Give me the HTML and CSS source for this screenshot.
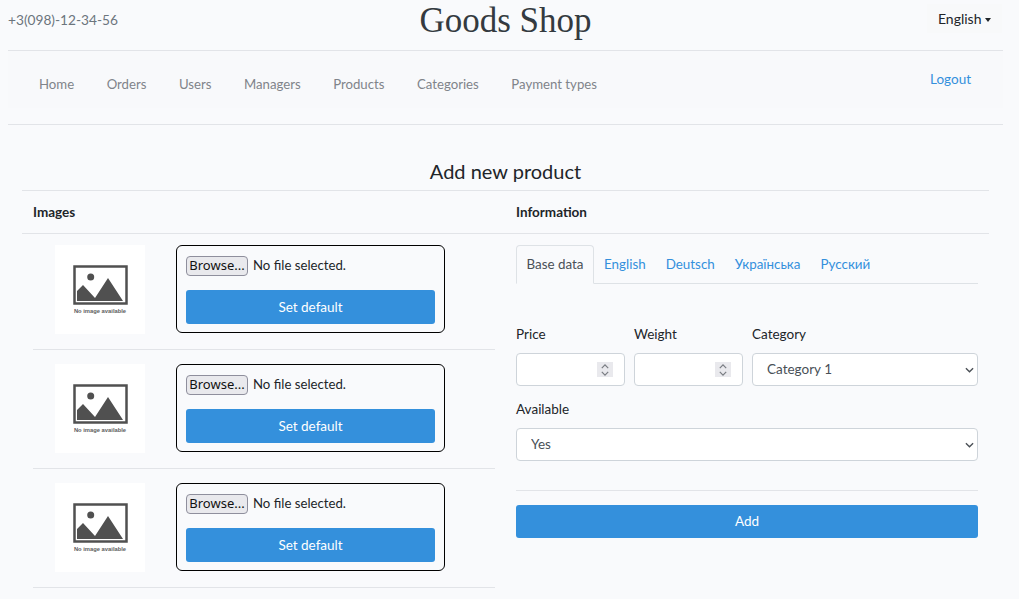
FILE: index.html
```html
<!DOCTYPE html>
<html>
<head>
    <title>Goods Shop</title>
    <link rel="stylesheet" href="styles.css">
</head>
<body>
    <svg class="defs">
        <symbol id="no-image" viewBox="0 0 90 89">
            <rect width="90" height="89" fill="#fff"/>
            <rect x="19.5" y="21.5" width="52" height="37" fill="none" stroke="#505050" stroke-width="2.5"/>
            <circle cx="35.7" cy="32" r="3.5" fill="#505050"/>
            <path d="M22 56 V46 L28 40 L40 53 L53 33 L68 56 Z" fill="#505050"/>
            <text class="thumb-text" x="45" y="68" text-anchor="middle">No image available</text>
        </symbol>
        <symbol id="chevron" viewBox="0 0 10 6">
            <path d="M1 1 L5 5 L9 1" fill="none" stroke="#4a4f55" stroke-width="1.5"/>
        </symbol>
    </svg>

    <header class="top-bar">
        <span class="phone">+3(098)-12-34-56</span>
        <h1 class="shop-name">Goods Shop</h1>
        <button class="lang-btn" type="button">English <i class="caret"></i></button>
    </header>

    <div class="nav-wrap">
        <nav class="main-nav">
            <ul class="nav-links">
                <li><a href="#">Home</a></li>
                <li><a href="#">Orders</a></li>
                <li><a href="#">Users</a></li>
                <li><a href="#">Managers</a></li>
                <li><a href="#">Products</a></li>
                <li><a href="#">Categories</a></li>
                <li><a href="#">Payment types</a></li>
            </ul>
            <a class="logout" href="#">Logout</a>
        </nav>
    </div>

    <main class="content">
        <h2 class="page-title">Add new product</h2>
        <div class="col-heads">
            <div class="col-head col-head-left">Images</div>
            <div class="col-head">Information</div>
        </div>

        <div class="columns">
            <section class="images">
                <div class="image-row">
                    <svg class="thumb"><use href="#no-image"/></svg>
                    <div class="file-box">
                        <div class="file-line"><button class="browse" type="button">Browse...</button><span>No file selected.</span></div>
                        <button class="btn-primary" type="button">Set default</button>
                    </div>
                </div>
                <div class="image-row">
                    <svg class="thumb"><use href="#no-image"/></svg>
                    <div class="file-box">
                        <div class="file-line"><button class="browse" type="button">Browse...</button><span>No file selected.</span></div>
                        <button class="btn-primary" type="button">Set default</button>
                    </div>
                </div>
                <div class="image-row">
                    <svg class="thumb"><use href="#no-image"/></svg>
                    <div class="file-box">
                        <div class="file-line"><button class="browse" type="button">Browse...</button><span>No file selected.</span></div>
                        <button class="btn-primary" type="button">Set default</button>
                    </div>
                </div>
            </section>

            <section class="info">
                <ul class="tabs">
                    <li class="tab active">Base data</li>
                    <li class="tab">English</li>
                    <li class="tab">Deutsch</li>
                    <li class="tab">Українська</li>
                    <li class="tab">Русский</li>
                </ul>

                <form class="product-form">
                    <div class="field-row">
                        <div class="field field-small">
                            <label for="price">Price</label>
                            <div class="control">
                                <input id="price" class="input" type="text">
                                <span class="spinner"><svg><use href="#chevron"/></svg><svg><use href="#chevron"/></svg></span>
                            </div>
                        </div>
                        <div class="field field-small">
                            <label for="weight">Weight</label>
                            <div class="control">
                                <input id="weight" class="input" type="text">
                                <span class="spinner"><svg><use href="#chevron"/></svg><svg><use href="#chevron"/></svg></span>
                            </div>
                        </div>
                        <div class="field field-wide">
                            <label for="category">Category</label>
                            <div class="control">
                                <select id="category" class="input"><option>Category 1</option></select>
                                <svg class="arrow"><use href="#chevron"/></svg>
                            </div>
                        </div>
                    </div>
                    <div class="field">
                        <label for="available">Available</label>
                        <div class="control">
                            <select id="available" class="input"><option>Yes</option></select>
                            <svg class="arrow"><use href="#chevron"/></svg>
                        </div>
                    </div>
                    <hr class="form-rule">
                    <button class="btn-primary btn-add" type="button">Add</button>
                </form>
            </section>
        </div>
    </main>
</body>
</html>
```

FILE: styles.css
```css
body {
    font-family: Lato, "Noto Sans", sans-serif;
    font-size: 13.5px;
    line-height: 1.5;
    color: #212529;
    background-color: #f9fafc;
    margin: 0;
    padding: 0 16px 0 8px;
}

.defs {
    display: none;
}

.top-bar {
    display: grid;
    grid-template-columns: 1fr auto 1fr;
    height: 50px;
    border-bottom: 1px solid #e2e4e8;
}

.phone {
    color: #6c757d;
    font-size: 13.7px;
    margin-top: 10px;
}

.shop-name {
    font-family: "Liberation Serif", serif;
    font-size: 35px;
    font-weight: 400;
    line-height: 40px;
    margin: 1px 0 0;
    color: #343a40;
}

.lang-btn {
    font: inherit;
    font-size: 14px;
    color: #212529;
    background-color: #f8f9fa;
    border: none;
    justify-self: end;
    height: 29px;
    width: 75px;
    margin: 4px 1px 0 0;
    padding: 0;
}

.caret {
    display: inline-block;
    vertical-align: 2px;
    border-top: 4px solid #212529;
    border-left: 3px solid transparent;
    border-right: 3px solid transparent;
}

.nav-wrap {
    padding-bottom: 16px;
    border-bottom: 1px solid #e2e4e8;
}

.main-nav {
    display: flex;
    justify-content: space-between;
    height: 57px;
    background-color: #f8f9fb;
    padding: 0 32px 0 31px;
}

.nav-links {
    display: flex;
    gap: 32.5px;
    list-style: none;
    font-size: 13.2px;
    margin: 0;
    padding: 24px 0 0;
}

.nav-links a {
    color: #80848a;
    text-decoration: none;
}

.logout {
    color: #3490dc;
    text-decoration: none;
    margin-top: 18px;
}

.content {
    padding: 0 14px;
}

.page-title {
    font-size: 20px;
    font-weight: 400;
    line-height: 30px;
    text-align: center;
    margin: 0;
    padding: 31px 0 4px;
}

.col-heads {
    display: flex;
    border-top: 1px solid #e2e4e8;
    border-bottom: 1px solid #e2e4e8;
    height: 42px;
    align-items: center;
    font-weight: 700;
}

.col-head-left {
    width: 494px;
    padding-left: 11px;
    box-sizing: border-box;
}

.columns {
    display: flex;
}

.images {
    width: 462px;
    margin-left: 11px;
    margin-right: 21px;
}

.image-row {
    display: flex;
    align-items: flex-start;
    height: 104px;
    padding-top: 11px;
    padding-left: 22px;
    margin-bottom: 3px;
    border-bottom: 1px solid #e2e4e8;
}

.thumb {
    width: 90px;
    height: 89px;
    margin-right: 31px;
}

.thumb-text {
    font-family: "Liberation Sans", sans-serif;
    font-size: 5.8px;
    font-weight: 700;
    fill: #606060;
}

.file-box {
    width: 269px;
    height: 88px;
    box-sizing: border-box;
    border: 1px solid #000;
    border-radius: 6px;
    padding: 9px;
}

.file-line {
    display: flex;
    align-items: center;
    gap: 5px;
    height: 21px;
    margin-bottom: 14px;
    font-size: 13.2px;
}

.browse {
    font-family: "Noto Sans", sans-serif;
    font-size: 13px;
    line-height: 16px;
    width: 62px;
    height: 20px;
    padding: 0 0 2px;
    color: #111;
    background-color: #e9e9ed;
    border: 1px solid #8f8f9d;
    border-radius: 4px;
}

.btn-primary {
    display: block;
    width: 100%;
    height: 34px;
    font: inherit;
    color: #fff;
    background-color: #3490dc;
    border: none;
    border-radius: 3px;
}

.info {
    width: 462px;
    padding-top: 11px;
}

.tabs {
    display: flex;
    list-style: none;
    margin: 0;
    padding: 0;
    height: 38px;
    border-bottom: 1px solid #dee2e6;
    font-size: 13.4px;
}

.tab {
    color: #3490dc;
    height: 38px;
    line-height: 38px;
    padding: 0 10px;
}

.tab.active {
    color: #495057;
    background-color: #f9fafc;
    border: 1px solid #dee2e6;
    border-bottom-color: #f9fafc;
    border-radius: 4px 4px 0 0;
    line-height: 37px;
    box-sizing: border-box;
    height: 39px;
    padding: 0 9.5px;
}

.product-form {
    padding-top: 39px;
}

.field-row {
    display: flex;
    gap: 9px;
}

.field-small {
    width: 109px;
}

.field-wide {
    flex: 1;
}

.field label {
    display: block;
    height: 22px;
    line-height: 22px;
    margin-bottom: 8px;
}

.field {
    margin-bottom: 12px;
}

.control {
    position: relative;
}

.input {
    display: block;
    appearance: none;
    width: 100%;
    height: 33px;
    box-sizing: border-box;
    font: inherit;
    color: #495057;
    background-color: #fff;
    border: 1px solid #ced4da;
    border-radius: 4px;
    padding: 0 14px;
}

.spinner {
    position: absolute;
    right: 12px;
    top: 9px;
    width: 16px;
    height: 15px;
    background-color: #e9e9ed;
    display: flex;
    flex-direction: column;
    align-items: center;
    justify-content: center;
    gap: 2px;
}

.spinner svg {
    width: 8px;
    height: 5px;
    opacity: 0.7;
}

.spinner svg:first-child {
    transform: rotate(180deg);
}

.arrow {
    position: absolute;
    right: 4px;
    top: 14px;
    width: 9px;
    height: 6px;
}

.form-rule {
    border: none;
    border-top: 1px solid #e2e4e8;
    margin: 29px 0 14px;
}

.btn-add {
    height: 33px;
}
```
